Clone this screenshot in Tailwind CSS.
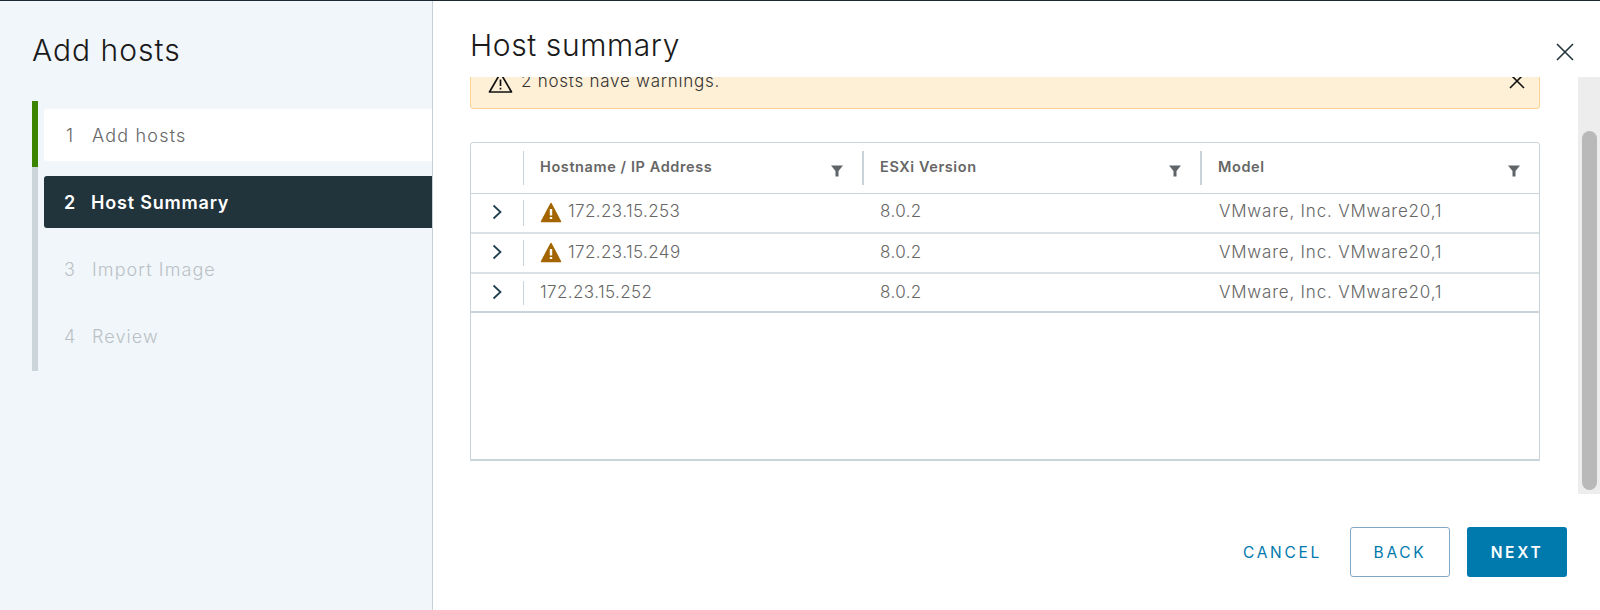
<!DOCTYPE html>
<html>
<head>
<meta charset="utf-8">
<script src="https://cdn.jsdelivr.net/npm/@tailwindcss/browser@4"></script>
</head>
<body class="m-0 bg-white">
<div class="flex flex-col w-[1600px] h-[610px] overflow-hidden font-['Inter','Liberation_Sans',sans-serif]">
  <div class="h-px bg-[#1b2a32] shrink-0"></div>
  <div class="flex flex-1 min-h-0">
    <aside class="w-[433px] shrink-0 bg-[#f1f6fa] border-r border-[#c5d0d8] pl-[32px] pt-[30px]">
      <h1 class="text-[30px] leading-[38px] font-light text-[#1a1a1a] tracking-[1px]">Add hosts</h1>
      <div class="mt-[32px] flex">
        <div class="w-[6px] h-[270px] bg-[#ccd6da] shrink-0"><div class="h-[66px] bg-[#3c8500]"></div></div>
        <div class="flex-1 pl-[6px] pt-2 flex flex-col text-[18px]">
          <div class="h-[52px] pt-[1px] flex items-center bg-white rounded-l-[3px] text-[#666] font-light tracking-[1.2px]"><span class="w-[48px] pl-[22px]">1</span><span>Add hosts</span></div>
          <div class="h-[52px] pt-[1px] mt-[15px] flex items-center bg-[#21333b] rounded-l-[3px] text-white font-semibold"><span class="w-[47px] pl-5">2</span><span class="tracking-[0.8px]">Host Summary</span></div>
          <div class="h-[52px] pt-[1px] mt-[15px] flex items-center text-[#b9c1c5] font-light tracking-[1.1px]"><span class="w-[48px] pl-5">3</span><span>Import Image</span></div>
          <div class="h-[52px] pt-[1px] mt-[15px] flex items-center text-[#b9c1c5] font-light tracking-[1.1px]"><span class="w-[48px] pl-5">4</span><span>Review</span></div>
        </div>
      </div>
    </aside>
    <main class="flex-1 min-w-0 flex flex-col">
      <header class="h-[76px] shrink-0 flex justify-between pl-[37px] pr-[25px]">
        <h2 class="text-[30px] leading-[38px] mt-[25px] font-light text-[#1a1a1a] tracking-[0.6px]">Host summary</h2>
        <svg class="mt-[41px]" width="20" height="20" viewBox="0 0 20 20" fill="none" stroke="#21333b" stroke-width="1.6"><path d="M2 2 18 18M18 2 2 18"/></svg>
      </header>
      <div class="h-[417px] shrink-0 flex overflow-hidden">
        <div class="flex-1 min-w-0 pl-[37px] pr-[38px]">
          <div class="-mt-[22px] h-[54px] bg-[#fef0d7] border border-[#ffd28f] rounded-[3px] flex items-center justify-between pl-[17px] pr-[13px] text-[#333] text-[17px] font-light tracking-[0.75px]">
            <div class="flex items-center gap-[8px] -mt-[1px]">
              <svg class="mt-[2px]" width="25" height="23" viewBox="0 0 25 23" fill="none" stroke="#111" stroke-width="1.7" stroke-linejoin="round"><path d="M12.5 2 23.5 21H1.5Z"/><path d="M12.5 8.5v6.5M12.5 16.7v1.8"/></svg>
              <span>2 hosts have warnings.</span>
            </div>
            <svg class="-mt-[2px]" width="18" height="18" viewBox="0 0 18 18" fill="none" stroke="#111" stroke-width="1.6"><path d="M2 2 16 16M16 2 2 16"/></svg>
          </div>
          <div class="mt-[33px] h-[318px] border border-[#c9d3da] rounded-t-[3px] text-[#666]">
            <div class="h-[51px] border-b border-[#c9d3da] grid grid-cols-[53px_340px_338px_1fr] items-center text-[14.5px] font-semibold text-[#666] tracking-[0.6px]">
              <div class="h-[34px] border-r border-[#c9d3da]"></div>
              <div class="h-[34px] flex items-center justify-between pl-4 pr-[18px] border-r-2 border-[#c9d3da]"><span class="-mt-[2px]">Hostname / IP Address</span><svg class="mt-[5px]" width="14" height="14" viewBox="0 0 14 14" fill="#5f6468"><path d="M1 1.5h12L8.5 7v5.5h-3V7Z"/></svg></div>
              <div class="h-[34px] flex items-center justify-between pl-[16px] pr-[18px] border-r-2 border-[#c9d3da]"><span class="-mt-[2px]">ESXi Version</span><svg class="mt-[5px]" width="14" height="14" viewBox="0 0 14 14" fill="#5f6468"><path d="M1 1.5h12L8.5 7v5.5h-3V7Z"/></svg></div>
              <div class="h-[34px] flex items-center justify-between pl-[16px] pr-[18px]"><span class="-mt-[2px]">Model</span><svg class="mt-[5px]" width="14" height="14" viewBox="0 0 14 14" fill="#5f6468"><path d="M1 1.5h12L8.5 7v5.5h-3V7Z"/></svg></div>
            </div>
            <div class="h-[40px] border-b-2 border-[#dbe2e6] grid grid-cols-[53px_340px_338px_1fr] items-center text-[17px] font-light tracking-[0.4px]">
              <div class="h-[26px] border-r border-[#c9d3da] flex items-center justify-center"><svg class="-mt-[2px]" width="12" height="16" viewBox="0 0 12 16" fill="none" stroke="#21404f" stroke-width="1.8"><path d="M2.5 1.5 9.5 8 2.5 14.5"/></svg></div>
              <div class="flex items-center gap-[6px] pl-[16px]"><svg class="-mt-[1px]" width="22" height="21" viewBox="0 0 22 21"><path fill="#a36500" stroke="#a36500" stroke-width="1.5" stroke-linejoin="round" d="M11 1.5 20.5 19.5H1.5Z"/><path stroke="#fff" stroke-width="2.4" d="M11 7v6.5M11 15v2"/></svg><span class="-mt-[3px]">172.23.15.253</span></div>
              <div class="pl-[16px] -mt-[3px]">8.0.2</div>
              <div class="pl-[17px] -mt-[3px] tracking-[0.8px]">VMware, Inc. VMware20,1</div>
            </div>
            <div class="h-[40px] border-b-2 border-[#dbe2e6] grid grid-cols-[53px_340px_338px_1fr] items-center text-[17px] font-light tracking-[0.4px]">
              <div class="h-[26px] border-r border-[#c9d3da] flex items-center justify-center"><svg class="-mt-[2px]" width="12" height="16" viewBox="0 0 12 16" fill="none" stroke="#21404f" stroke-width="1.8"><path d="M2.5 1.5 9.5 8 2.5 14.5"/></svg></div>
              <div class="flex items-center gap-[6px] pl-[16px]"><svg class="-mt-[1px]" width="22" height="21" viewBox="0 0 22 21"><path fill="#a36500" stroke="#a36500" stroke-width="1.5" stroke-linejoin="round" d="M11 1.5 20.5 19.5H1.5Z"/><path stroke="#fff" stroke-width="2.4" d="M11 7v6.5M11 15v2"/></svg><span class="-mt-[1px]">172.23.15.249</span></div>
              <div class="pl-[16px] -mt-[1px]">8.0.2</div>
              <div class="pl-[17px] -mt-[1px] tracking-[0.8px]">VMware, Inc. VMware20,1</div>
            </div>
            <div class="h-[39px] border-b-2 border-[#c9d3da] grid grid-cols-[53px_340px_338px_1fr] items-center text-[17px] font-light tracking-[0.4px]">
              <div class="h-[24px] border-r border-[#c9d3da] flex items-center justify-center"><svg class="-mt-[2px]" width="12" height="16" viewBox="0 0 12 16" fill="none" stroke="#21404f" stroke-width="1.8"><path d="M2.5 1.5 9.5 8 2.5 14.5"/></svg></div>
              <div class="pl-[16px]">172.23.15.252</div>
              <div class="pl-[16px]">8.0.2</div>
              <div class="pl-[17px] tracking-[0.8px]">VMware, Inc. VMware20,1</div>
            </div>
          </div>
          <div class="h-[1px] bg-[#c9d3da]"></div>
        </div>
        <div class="w-[22px] shrink-0 bg-[#ededed] pl-1 pr-[3px] pt-[54px]"><div class="h-[359px] rounded-full bg-[#b9b9b9]"></div></div>
      </div>
      <footer class="flex-1 flex justify-end items-start pt-[33px] pr-[33px] text-[15.5px] tracking-[2.7px]">
        <button class="h-[50px] w-[107px] pt-[2px] text-[#0079ad] font-normal flex items-center justify-start pl-0">CANCEL</button>
        <button class="h-[50px] w-[100px] pt-[2px] mr-[17px] border border-[#7fa8c4] rounded-[3px] text-[#0079ad] font-normal">BACK</button>
        <button class="h-[50px] w-[100px] pt-[2px] rounded-[3px] bg-[#0079ad] text-white font-semibold">NEXT</button>
      </footer>
    </main>
  </div>
</div>
</body>
</html>
